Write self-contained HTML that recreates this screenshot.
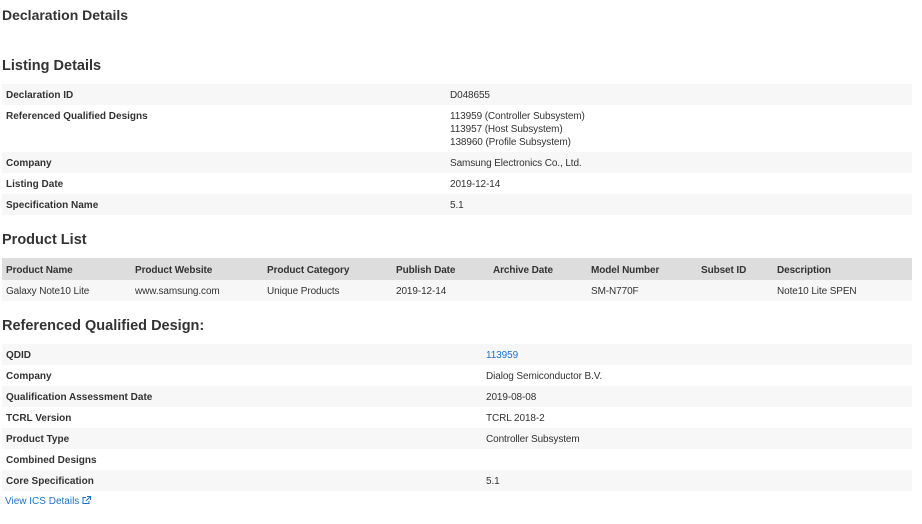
<!DOCTYPE html>
<html><head><meta charset="utf-8"><style>
body{margin:0;width:922px;height:524px;background:#fff;font-family:"Liberation Sans",Arial,sans-serif;color:#333;position:relative;overflow:hidden}
.a{position:absolute}
h1,h2{position:absolute;margin:0;font-weight:bold;color:#333;white-space:nowrap}
h1{font-size:14px;left:2px;top:7px}
h2{font-size:14.5px;left:2px}
.r{position:absolute;left:2px;width:910px;height:21px;font-size:10px}
.s{background:#f7f7f7}
.r b{position:absolute;left:4px;top:6px;font-weight:bold;color:#333}
.r span{position:absolute;top:5px;line-height:13px;color:#333;letter-spacing:-0.1px}
.h{background:#ddd}
.h span{font-weight:bold}
a{color:#1a73c8;text-decoration:none}
</style></head><body>
<h1>Declaration Details</h1>
<h2 style="top:58px">Listing Details</h2>
<div class="r s" style="top:84px"><b>Declaration ID</b><span style="left:448px">D048655</span></div>
<div class="r" style="top:105px;height:47px"><b>Referenced Qualified Designs</b><span style="left:448px">113959 (Controller Subsystem)<br>113957 (Host Subsystem)<br>138960 (Profile Subsystem)</span></div>
<div class="r s" style="top:152px"><b>Company</b><span style="left:448px">Samsung Electronics Co., Ltd.</span></div>
<div class="r" style="top:173px"><b>Listing Date</b><span style="left:448px">2019-12-14</span></div>
<div class="r s" style="top:194px"><b>Specification Name</b><span style="left:448px">5.1</span></div>

<h2 style="top:232px">Product List</h2>
<div class="r h" style="top:258px;height:22px"><span style="left:4px;top:6px">Product Name</span><span style="left:133px;top:6px">Product Website</span><span style="left:265px;top:6px">Product Category</span><span style="left:394px;top:6px">Publish Date</span><span style="left:491px;top:6px">Archive Date</span><span style="left:589px;top:6px">Model Number</span><span style="left:699px;top:6px">Subset ID</span><span style="left:775px;top:6px">Description</span></div>
<div class="r s" style="top:280px"><span style="left:4px">Galaxy Note10 Lite</span><span style="left:133px">www.samsung.com</span><span style="left:265px">Unique Products</span><span style="left:394px">2019-12-14</span><span style="left:589px">SM-N770F</span><span style="left:775px">Note10 Lite SPEN</span></div>

<h2 style="top:318px">Referenced Qualified Design:</h2>
<div class="r s" style="top:344px"><b>QDID</b><span style="left:484px"><a>113959</a></span></div>
<div class="r" style="top:365px"><b>Company</b><span style="left:484px">Dialog Semiconductor B.V.</span></div>
<div class="r s" style="top:386px"><b>Qualification Assessment Date</b><span style="left:484px">2019-08-08</span></div>
<div class="r" style="top:407px"><b>TCRL Version</b><span style="left:484px">TCRL 2018-2</span></div>
<div class="r s" style="top:428px"><b>Product Type</b><span style="left:484px">Controller Subsystem</span></div>
<div class="r" style="top:449px"><b>Combined Designs</b></div>
<div class="r s" style="top:470px"><b>Core Specification</b><span style="left:484px">5.1</span></div>
<div class="a" style="left:5px;top:496px;font-size:10px"><a>View ICS Details <svg width="9" height="9" viewBox="0 0 9 9" style="vertical-align:-1px"><path d="M4 1.5H1v6h6V5" fill="none" stroke="#1a73c8" stroke-width="1"/><path d="M5 .5h3.5V4M8.5.5 4 5" fill="none" stroke="#1a73c8" stroke-width="1"/></svg></a></div>
</body></html>
